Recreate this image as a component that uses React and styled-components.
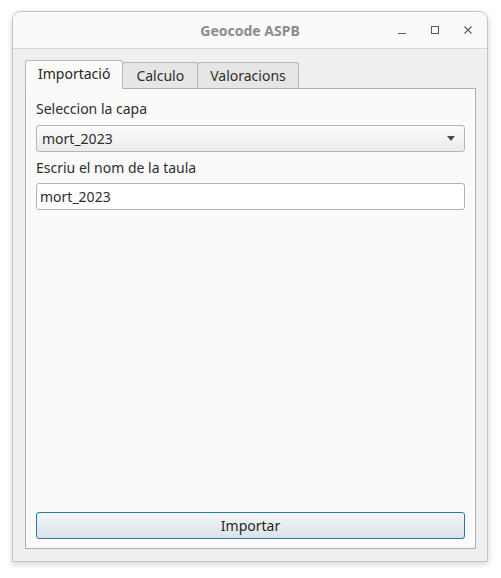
import React from "react";
import styled, { createGlobalStyle } from "styled-components";

const Global = createGlobalStyle`
  html, body { margin: 0; padding: 0; background: #ffffff; }
  body { font-family: "Noto Sans", "Open Sans", sans-serif; }
`;

const Page = styled.div`
  width: 501px;
  height: 578px;
  padding: 11px 13px 0 12px;
  box-sizing: border-box;
`;

const Window = styled.div`
  width: 476px;
  height: 551px;
  border: 1px solid #c4c4c4;
  border-radius: 9px 9px 0 0;
  box-sizing: border-box;
  background: #efefef;
  box-shadow: 0 2px 6px rgba(0, 0, 0, 0.18);
  display: flex;
  flex-direction: column;
  overflow: hidden;
`;

const TitleBar = styled.div`
  height: 37px;
  flex: none;
  background: #fafafa;
  border-bottom: 1px solid #d6d6d6;
  box-sizing: border-box;
  display: grid;
  grid-template-columns: 1fr auto 1fr;
  align-items: center;
`;

const Title = styled.div`
  grid-column: 2;
  font-size: 14px;
  font-weight: 700;
  color: #8c8c8c;
`;

const Controls = styled.div`
  grid-column: 3;
  justify-self: end;
  display: flex;
  align-items: center;
  gap: 19px;
  padding-right: 12px;
`;

const Ctl = styled.svg`
  width: 14px;
  height: 14px;
  display: block;
`;

const Body = styled.div`
  flex: 1;
  padding: 11px 11px 12px 12px;
  display: flex;
  flex-direction: column;
`;

const TabBar = styled.div`
  display: flex;
  align-items: flex-end;
  height: 29px;
  position: relative;
  z-index: 1;
`;

const Tab = styled.div`
  box-sizing: border-box;
  height: ${(p) => (p.$active ? "29px" : "27px")};
  padding: 0 ${(p) => (p.$pad || 11)}px;
  display: flex;
  align-items: center;
  font-size: 14px;
  color: ${(p) => (p.$active ? "#2b2420" : "#2e2e2e")};
  background: ${(p) => (p.$active ? "#fafafa" : "#e6e6e6")};
  border: 1px solid #b9b9b9;
  border-bottom: ${(p) => (p.$active ? "1px solid #fafafa" : "1px solid #b0b0b0")};
  border-radius: 3px 3px 0 0;
  margin-left: ${(p) => (p.$first ? "0" : "-1px")};
  ${(p) => (p.$active ? "z-index: 2; padding-bottom: 2px;" : "")}
`;

const Pane = styled.div`
  flex: 1;
  margin-top: -1px;
  background: #fafafa;
  border: 1px solid #b0b0b0;
  box-sizing: border-box;
  padding: 9px 10px 9px 10px;
  display: flex;
  flex-direction: column;
`;

const Label = styled.div`
  font-size: 14px;
  color: #2e2e2e;
  height: 22px;
  line-height: 22px;
  margin-top: ${(p) => p.$mt || 0}px;
`;

const Combo = styled.div`
  margin-top: 5px;
  height: 27px;
  box-sizing: border-box;
  border: 1px solid #b5b5b5;
  border-radius: 3px;
  background: linear-gradient(#fcfcfc, #ebebeb);
  display: flex;
  align-items: center;
  justify-content: space-between;
  padding: 0 9px 0 5px;
  font-size: 14px;
  color: #2e2e2e;
`;

const Arrow = styled.svg`
  width: 8px;
  height: 5px;
  display: block;
`;

const Input = styled.div`
  margin-top: 4px;
  height: 27px;
  box-sizing: border-box;
  border: 1px solid #b3b3b3;
  border-radius: 3px;
  background: #ffffff;
  display: flex;
  align-items: center;
  padding: 0 3px;
  font-size: 14px;
  color: #2e2e2e;
`;

const Spacer = styled.div`
  flex: 1;
`;

const Button = styled.div`
  height: 27px;
  box-sizing: border-box;
  border: 1px solid #2a75a8;
  border-radius: 3px;
  background: linear-gradient(#f4f6f8, #dae2ea);
  display: flex;
  align-items: center;
  justify-content: center;
  font-size: 14px;
  color: #2b2420;
`;

export default function App() {
  return (
    <>
      <Global />
      <Page>
        <Window>
          <TitleBar>
            <Title>Geocode ASPB</Title>
            <Controls>
              <Ctl viewBox="0 0 14 14">
                <line x1="3" y1="10.5" x2="11" y2="10.5" stroke="#5a5a5a" strokeWidth="1" />
              </Ctl>
              <Ctl viewBox="0 0 14 14">
                <rect x="3.5" y="3.5" width="7" height="7" fill="none" stroke="#5a5a5a" strokeWidth="1" />
              </Ctl>
              <Ctl viewBox="0 0 14 14">
                <path d="M3.5 3.5 L10.5 10.5 M10.5 3.5 L3.5 10.5" stroke="#5a5a5a" strokeWidth="1.1" />
              </Ctl>
            </Controls>
          </TitleBar>
          <Body>
            <TabBar>
              <Tab $active $first $pad={12}>Importació</Tab>
              <Tab $pad={13}>Calculo</Tab>
              <Tab $pad={12}>Valoracions</Tab>
            </TabBar>
            <Pane>
              <Label>Seleccion la capa</Label>
              <Combo>
                <span>mort_2023</span>
                <Arrow viewBox="0 0 8 5">
                  <path d="M0 0 L8 0 L4 5 Z" fill="#4a4a4a" />
                </Arrow>
              </Combo>
              <Label $mt={5}>Escriu el nom de la taula</Label>
              <Input>mort_2023</Input>
              <Spacer />
              <Button>Importar</Button>
            </Pane>
          </Body>
        </Window>
      </Page>
    </>
  );
}
